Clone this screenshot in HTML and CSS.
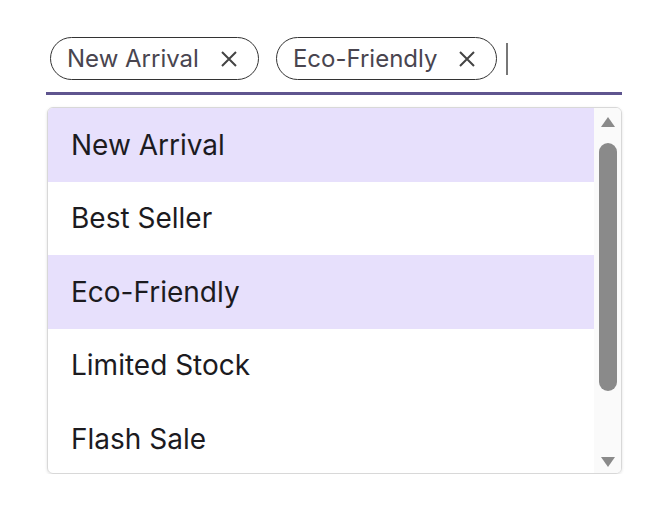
FILE: index.html
```html
<!DOCTYPE html>
<html lang="en">
<head>
    <meta charset="UTF-8">
    <title>Tags</title>
    <link rel="stylesheet" href="styles.css">
</head>
<body>
    <div class="tag-picker">
        <div class="tag-field">
            <span class="chip">New Arrival
                <svg class="chip-x" viewBox="0 0 18 18"><path d="M2 2L16 16M16 2L2 16"/></svg>
            </span>
            <span class="chip">Eco-Friendly
                <svg class="chip-x" viewBox="0 0 18 18"><path d="M2 2L16 16M16 2L2 16"/></svg>
            </span>
            <span class="caret"></span>
        </div>
        <div class="listbox">
            <ul class="options">
                <li class="option selected">New Arrival</li>
                <li class="option">Best Seller</li>
                <li class="option selected">Eco-Friendly</li>
                <li class="option">Limited Stock</li>
                <li class="option">Flash Sale</li>
            </ul>
            <div class="scrollbar">
                <span class="arrow up"></span>
                <div class="track"><div class="thumb"></div></div>
                <span class="arrow down"></span>
            </div>
        </div>
    </div>
</body>
</html>
```

FILE: styles.css
```css
body {
    margin: 0;
    background: #fff;
    font-family: Inter, "Noto Sans", sans-serif;
}
.tag-picker {
    width: 576px;
    margin: 37px 0 0 46px;
}
.tag-field {
    display: flex;
    align-items: center;
    gap: 17px;
    padding: 0 0 12px 4px;
    border-bottom: 3px solid #5f558f;
}
.chip {
    display: flex;
    align-items: center;
    gap: 23px;
    height: 43px;
    box-sizing: border-box;
    padding: 0 22px 0 16px;
    border: 1.6px solid #333;
    border-radius: 22px;
    font-size: 24px;
    color: #49454f;
}
.chip-x {
    width: 18px;
    height: 18px;
    margin: 0 -2px;
    fill: none;
    stroke: #444;
    stroke-width: 2;
}
.caret {
    width: 2px;
    height: 32px;
    margin-left: -8px;
    background: #777;
}
.listbox {
    display: flex;
    height: 367px;
    margin: 12px 0 0 1px;
    box-sizing: border-box;
    border: 1px solid #d8d8d8;
    border-radius: 6px;
    box-shadow: 0 1px 3px rgba(0,0,0,0.12);
    overflow: hidden;
}
.options {
    flex: 1;
    margin: 0;
    padding: 0;
    list-style: none;
    overflow: hidden;
}
.option {
    height: 73.5px;
    display: flex;
    align-items: center;
    padding-left: 23px;
    font-size: 28px;
    color: #1c1b1f;
}
.option.selected {
    background: #e7e0fc;
}
.scrollbar {
    width: 27px;
    display: flex;
    flex-direction: column;
    align-items: center;
    background: #fafafa;
}
.arrow {
    width: 0;
    height: 0;
    border-left: 7px solid transparent;
    border-right: 7px solid transparent;
}
.arrow.up {
    margin: 9px 0 0;
    border-bottom: 10px solid #8a8a8a;
}
.arrow.down {
    margin: 0 0 6px;
    border-top: 10px solid #8a8a8a;
}
.track {
    flex: 1;
    width: 100%;
    padding: 16px 0 0;
    display: flex;
    justify-content: center;
}
.thumb {
    width: 18px;
    height: 248px;
    border-radius: 9px;
    background: #8a8a8a;
}
```
